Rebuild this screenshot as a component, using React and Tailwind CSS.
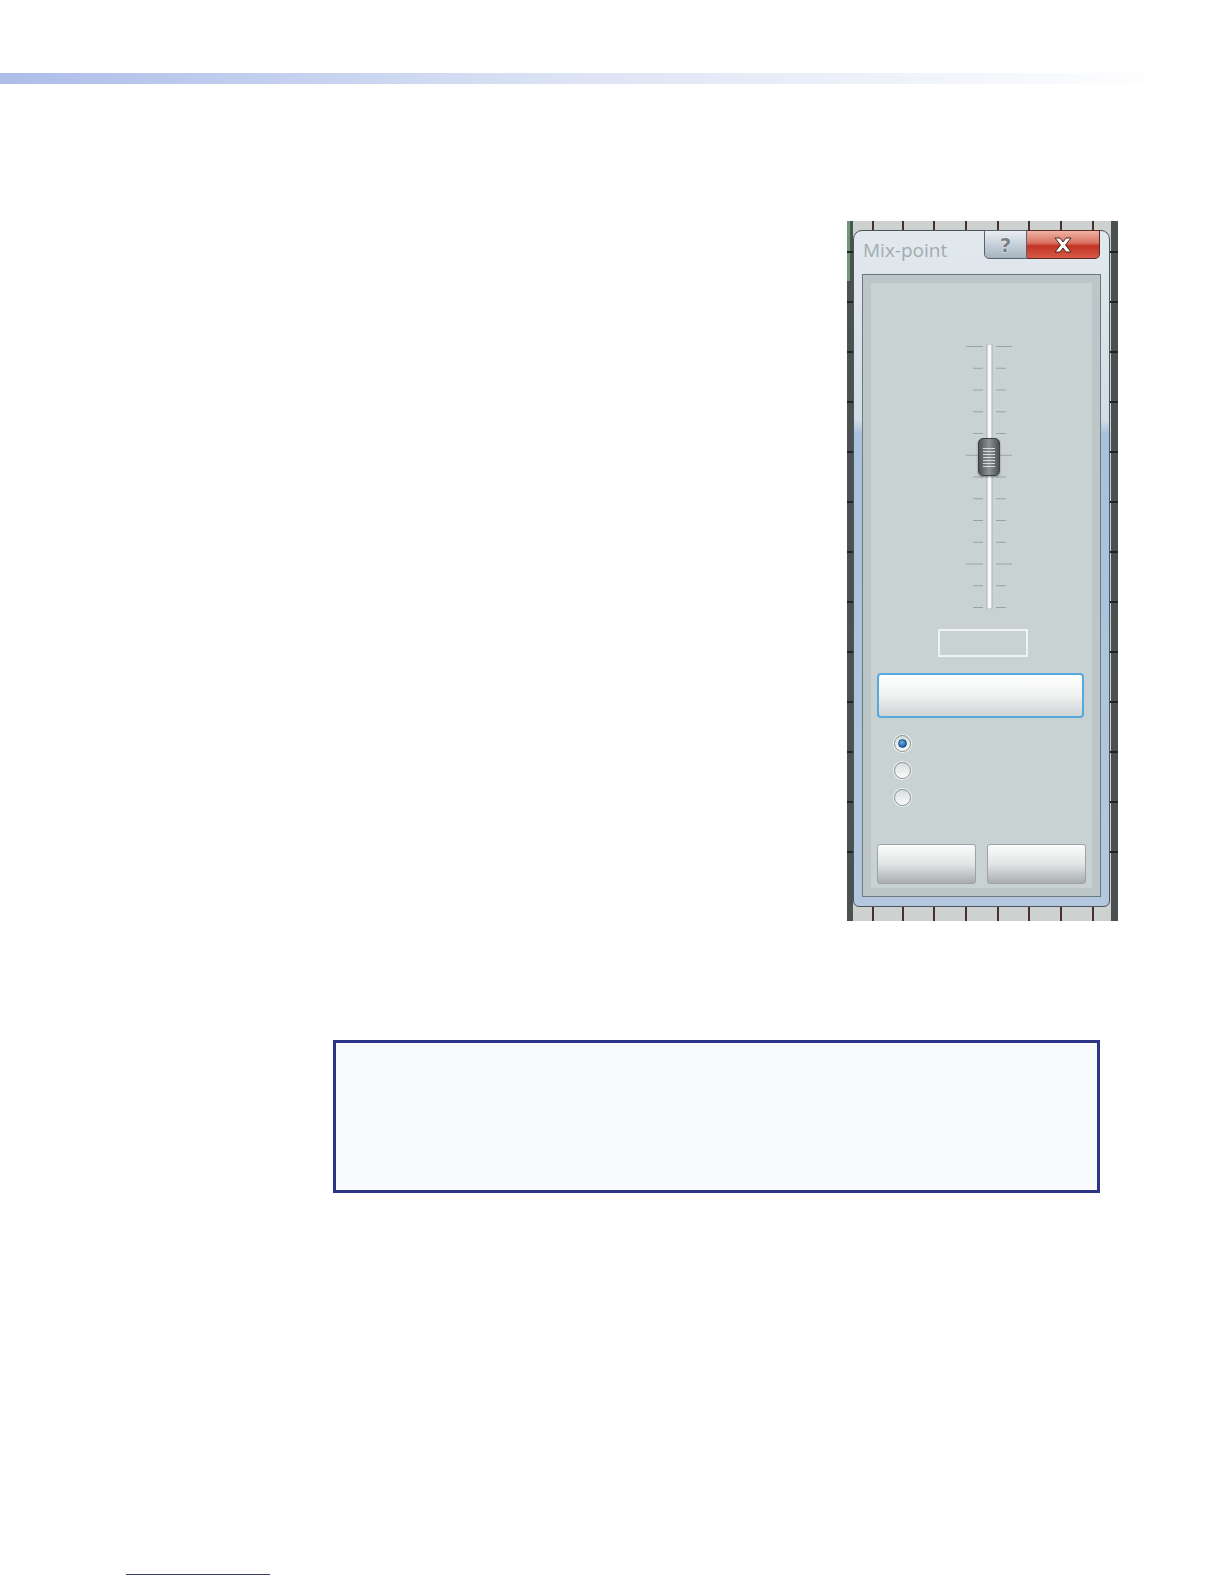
import React from "react";

const TICKS = Array.from({ length: 13 }, (_, i) => 2 + i * 21.75);
const GRID_X = [25, 55, 86, 118, 150, 181, 213, 245];
const GRID_Y = [30, 80, 130, 180, 230, 280, 330, 380, 430, 480, 530, 580, 630];

function Backdrop() {
  return (
    <svg className="absolute inset-0" width="271" height="700" viewBox="0 0 271 700">
      <rect width="271" height="700" fill="#cdd1d0" />
      <rect x="0" y="0" width="6" height="700" fill="#4b5150" />
      <rect x="264" y="0" width="7" height="700" fill="#4b5150" />
      <rect x="0" y="0" width="3" height="60" fill="#6f9a74" />
      {GRID_X.map((x) => (
        <g key={x}>
          <rect x={x} y="0" width="2" height="16" fill="#4a2f30" />
          <rect x={x} y="686" width="2" height="14" fill="#4a2f30" />
        </g>
      ))}
      {GRID_Y.map((y) => (
        <g key={y}>
          <rect x="0" y={y} width="8" height="2" fill="#1f2424" />
          <rect x="263" y={y} width="8" height="2" fill="#1f2424" />
        </g>
      ))}
    </svg>
  );
}

function Slider() {
  return (
    <div className="relative mt-[61px] h-[265px] w-full">
      <svg width="221" height="265" viewBox="0 0 221 265">
        {TICKS.map((y, i) => {
          const long = i === 0 || i === 5 || i === 10;
          return (
            <g key={i}>
              <rect x={long ? 95 : 102} y={y} width={long ? 17 : 10} height="1" fill="#9aa3a3" />
              <rect x="125" y={y} width={long ? 16 : 10} height="1" fill="#9aa3a3" />
            </g>
          );
        })}
        <rect x="116" y="0" width="5" height="265" fill="#f4f7f7" stroke="#a9b2b2" strokeWidth="1" />
        <rect x="118" y="1" width="1" height="263" fill="#ffffff" />
      </svg>
      <div className="absolute left-[107px] top-[94px] flex h-[38px] w-[22px] flex-col items-center justify-center gap-[2px] rounded-[5px] border border-[#3c4142] bg-gradient-to-r from-[#4e5354] via-[#8d9495] to-[#4e5354] shadow-[0_1px_2px_rgba(0,0,0,0.4)]">
        {Array.from({ length: 7 }).map((_, i) => (
          <div key={i} className="h-[1px] w-[12px] bg-[#d7dcdc]" />
        ))}
      </div>
    </div>
  );
}

function Radio({ on }) {
  return (
    <div className="flex h-[17px] w-[17px] items-center justify-center rounded-full border border-[#8b9292] bg-gradient-to-b from-[#d6dcdc] to-[#fbfcfc] shadow-[0_0_0_1px_#eef1f1]">
      {on && (
        <div className="h-[9px] w-[9px] rounded-full border border-[#1b4f84] bg-[radial-gradient(circle_at_40%_35%,#6fb6ee,#1f63a6_70%)]" />
      )}
    </div>
  );
}

function MixPoint() {
  return (
    <div className="relative ml-[847px] mt-[137px] h-[700px] w-[271px] pl-[6px] pt-[9px]">
      <Backdrop />
      <div className="relative flex h-[677px] w-[257px] flex-col rounded-t-[9px] rounded-b-[6px] border border-[#4c545c] bg-[linear-gradient(to_bottom,#e2e9ee_0%,#d2dce5_28%,#a8c1dc_30%,#b3c8df_100%)]">
        <div className="flex h-[43px] items-start justify-between">
          <span className="ml-[9px] mt-[10px] text-[19px] leading-none text-[#a2abb2] [font-family:'Open_Sans',sans-serif]">
            Mix-point
          </span>
          <div className="mr-[9px] -mt-[1px] flex h-[29px]">
            <div className="flex w-[43px] items-center justify-center rounded-bl-[5px] border border-[#5a636c] bg-gradient-to-b from-[#e9eef2] via-[#c6d0d9] to-[#a6b3bf] text-[20px] font-bold leading-none text-[#78828c] [font-family:'DejaVu_Sans',sans-serif] [text-shadow:0_0_2px_#ffffff,0_0_1px_#ffffff]">
              ?
            </div>
            <div className="flex w-[73px] items-center justify-center rounded-br-[5px] border border-l-0 border-[#5a2a24] bg-[linear-gradient(to_bottom,#eeb3a6_0%,#d8705e_45%,#c23222_55%,#d65a47_100%)]">
              <svg width="20" height="16" viewBox="0 0 20 16">
                <path d="M2 1h5l3 4 3-4h5l-5.5 7 5.5 7h-5l-3-4-3 4H2l5.5-7z" fill="#ffffff" stroke="#4a2420" strokeWidth="1" />
              </svg>
            </div>
          </div>
        </div>
        <div className="mx-[8px] mb-[9px] flex flex-1 border border-[#6d787d] bg-[#bcc6c6] p-[8px]">
          <div className="flex flex-1 flex-col bg-[#c8d2d2]">
            <Slider />
            <div className="ml-[67px] mt-[20px] h-[28px] w-[90px] border-2 border-[#eef2f2]" />
            <div className="ml-[6px] mt-[16px] h-[45px] w-[207px] rounded-[4px] border-2 border-[#57a8de] bg-gradient-to-b from-[#ffffff] via-[#f0f2f2] to-[#cfd3d3]" />
            <div className="ml-[23px] mt-[17px] flex flex-col gap-[10px]">
              <Radio on />
              <Radio />
              <Radio />
            </div>
            <div className="mb-[4px] ml-[6px] mt-auto flex gap-[11px]">
              <div className="h-[40px] w-[99px] rounded-[3px] border border-[#9da3a3] bg-gradient-to-b from-[#fbfbfb] via-[#e2e5e5] to-[#a8adad]" />
              <div className="h-[40px] w-[99px] rounded-[3px] border border-[#9da3a3] bg-gradient-to-b from-[#fbfbfb] via-[#e2e5e5] to-[#a8adad]" />
            </div>
          </div>
        </div>
      </div>
    </div>
  );
}

export default function App() {
  return (
    <div className="min-h-[1584px] w-full bg-white pt-[73px]">
      <div className="h-[11px] w-[1170px] bg-gradient-to-r from-[#adbde9] via-[#dde4f4] to-white" />
      <MixPoint />
      <div className="ml-[333px] mt-[119px] h-[153px] w-[767px] border-[3px] border-[#2d3686] bg-[#f8fafe]" />
      <div className="ml-[126px] mt-[381px] h-[1px] w-[144px] bg-[#3a3f6a]" />
    </div>
  );
}
